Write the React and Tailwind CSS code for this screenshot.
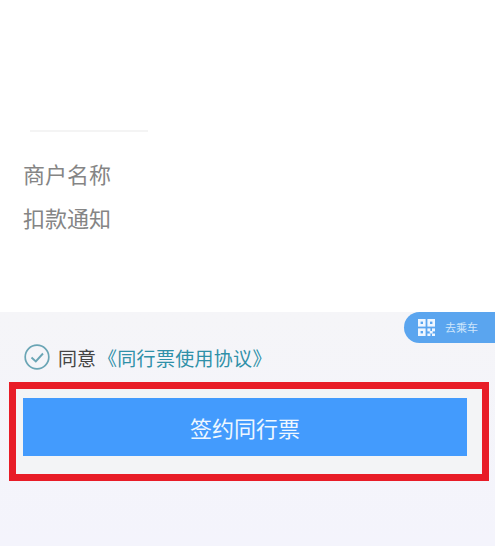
const cjk = { fontFamily: '"Noto Sans CJK SC", "Noto Sans", sans-serif' };

function QrIcon() {
  return (
    <svg width="17" height="17" viewBox="0 0 17 17" fill="none" className="shrink-0">
      <g stroke="#eef6ff" strokeWidth="2.6">
        <rect x="1.3" y="1.3" width="5" height="5" />
        <rect x="10.7" y="1.3" width="5" height="5" />
        <rect x="1.3" y="10.7" width="5" height="5" />
      </g>
      <g fill="#eef6ff">
        <rect x="9.4" y="9.4" width="3" height="3" />
        <rect x="14" y="9.4" width="3" height="3" />
        <rect x="11.7" y="12" width="3" height="2.5" />
        <rect x="9.4" y="14.5" width="3" height="2.5" />
        <rect x="14" y="14.5" width="3" height="2.5" />
      </g>
    </svg>
  );
}

export default function App() {
  return (
    <div className="relative w-[495px] h-[546px] overflow-hidden bg-white flex flex-col" style={cjk}>
      <div className="h-[312px] shrink-0 flex flex-col pt-[130px]">
        <div className="ml-[30px] w-[118px] h-[2px] bg-[#f4f4f4]" />
        <div className="ml-[23px] mt-[25px] flex flex-col gap-[12px] text-[22px] leading-[32px] text-[#858585]">
          <div>商户名称</div>
          <div>扣款通知</div>
        </div>
      </div>

      <div className="flex-1 bg-gradient-to-b from-[#f5f5f8] to-[#f4f4fc] flex flex-col">
        <div className="ml-[24px] mt-[31px] h-[28px] flex items-center">
          <svg width="26" height="26" viewBox="0 0 26 26" fill="none" className="shrink-0">
            <circle cx="13" cy="13" r="11.8" stroke="#6aa5b5" strokeWidth="1.7" />
            <path d="M7.5 13.5 L11.8 17.5 L19 9.5" stroke="#6aa5b5" strokeWidth="1.9" fill="none" />
          </svg>
          <span className="ml-[8px] pt-[2px] text-[19px] leading-[28px] text-[#444444] whitespace-nowrap">同意</span>
          <span className="ml-[2px] pt-[2px] text-[19px] leading-[28px] tracking-[0.3px] text-[#2f90a8] whitespace-nowrap">《同行票使用协议》</span>
        </div>

        <div className="ml-[9px] mt-[11px] w-[480px] h-[99px] border-[7px] border-[#e81c27] bg-[#f3f4f6] px-[7px] pt-[9px]">
          <button className="w-[444px] h-[58px] bg-[#439bfd] text-[#eef7ff] text-[22px] flex items-center justify-center">
            签约同行票
          </button>
        </div>
      </div>

      <div className="absolute right-0 top-[312px] w-[91px] h-[31px] rounded-l-full bg-[#5aa5ef] flex items-center pl-[14px] text-[#cfe6fb] text-[11px]">
        <QrIcon />
        <span className="ml-[10px] whitespace-nowrap">去乘车</span>
      </div>
    </div>
  );
}
